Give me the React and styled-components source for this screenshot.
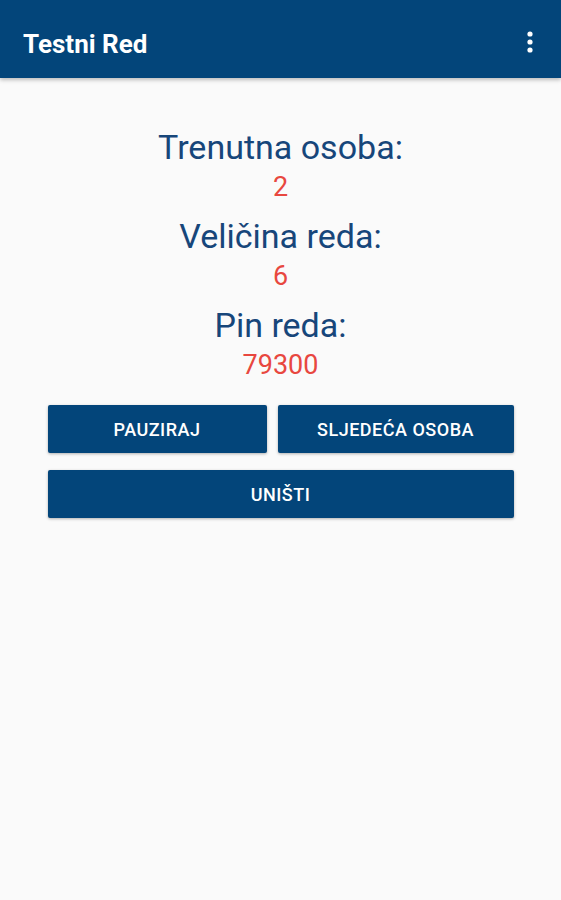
import React from "react";
import styled, { createGlobalStyle } from "styled-components";

const GlobalStyle = createGlobalStyle`
  html, body {
    margin: 0;
    padding: 0;
    background: #fafafa;
    font-family: Roboto, "Noto Sans", "Liberation Sans", sans-serif;
  }
`;

const Page = styled.div`
  width: 561px;
  min-height: 900px;
  background: #fafafa;
`;

const AppBar = styled.header`
  height: 78px;
  background: #03457a;
  display: flex;
  align-items: center;
  justify-content: space-between;
  padding: 6px 26px 0 23px;
  box-sizing: border-box;
  box-shadow: 0 2px 4px rgba(0, 0, 0, 0.25);
`;

const Title = styled.h1`
  margin: 3px 0 0;
  color: #fff;
  font-size: 26px;
  font-weight: 700;
  line-height: 30px;
`;

const MenuButton = styled.button`
  border: 0;
  background: none;
  padding: 0;
  width: 10px;
  height: 24px;
  display: flex;
  align-items: center;
  justify-content: center;
`;

const Content = styled.main`
  padding-top: 49px;
  display: flex;
  flex-direction: column;
  align-items: center;
`;

const InfoBlock = styled.div`
  display: flex;
  flex-direction: column;
  align-items: center;
  margin-bottom: 9px;
`;

const Label = styled.div`
  color: #17467a;
  font-size: 34px;
  line-height: 40px;
`;

const Value = styled.div`
  color: #e8473f;
  font-size: 27px;
  line-height: 40px;
`;

const Buttons = styled.div`
  width: 466px;
  margin-top: 11px;
  display: grid;
  grid-template-columns: 219px 1fr;
  column-gap: 11px;
  row-gap: 17px;
`;

const ActionButton = styled.button`
  grid-column: ${(p) => (p.$wide ? "1 / -1" : "auto")};
  height: 48px;
  border: 0;
  border-radius: 2px;
  background: #03457a;
  color: #fff;
  font-family: Roboto, "Liberation Sans", sans-serif;
  font-size: 18px;
  font-weight: 500;
  letter-spacing: 0.5px;
  text-transform: uppercase;
  box-shadow: 0 1px 3px rgba(0, 0, 0, 0.3);
`;

const info = [
  { label: "Trenutna osoba:", value: "2" },
  { label: "Veličina reda:", value: "6" },
  { label: "Pin reda:", value: "79300" },
];

export default function App() {
  return (
    <Page>
      <GlobalStyle />
      <AppBar>
        <Title>Testni Red</Title>
        <MenuButton aria-label="menu">
          <svg width="8" height="24" viewBox="0 0 8 24">
            <circle cx="4" cy="4" r="2.6" fill="#fff" />
            <circle cx="4" cy="12" r="2.6" fill="#fff" />
            <circle cx="4" cy="20" r="2.6" fill="#fff" />
          </svg>
        </MenuButton>
      </AppBar>
      <Content>
        {info.map((item) => (
          <InfoBlock key={item.label}>
            <Label>{item.label}</Label>
            <Value>{item.value}</Value>
          </InfoBlock>
        ))}
        <Buttons>
          <ActionButton>Pauziraj</ActionButton>
          <ActionButton>Sljedeća osoba</ActionButton>
          <ActionButton $wide>Uništi</ActionButton>
        </Buttons>
      </Content>
    </Page>
  );
}
